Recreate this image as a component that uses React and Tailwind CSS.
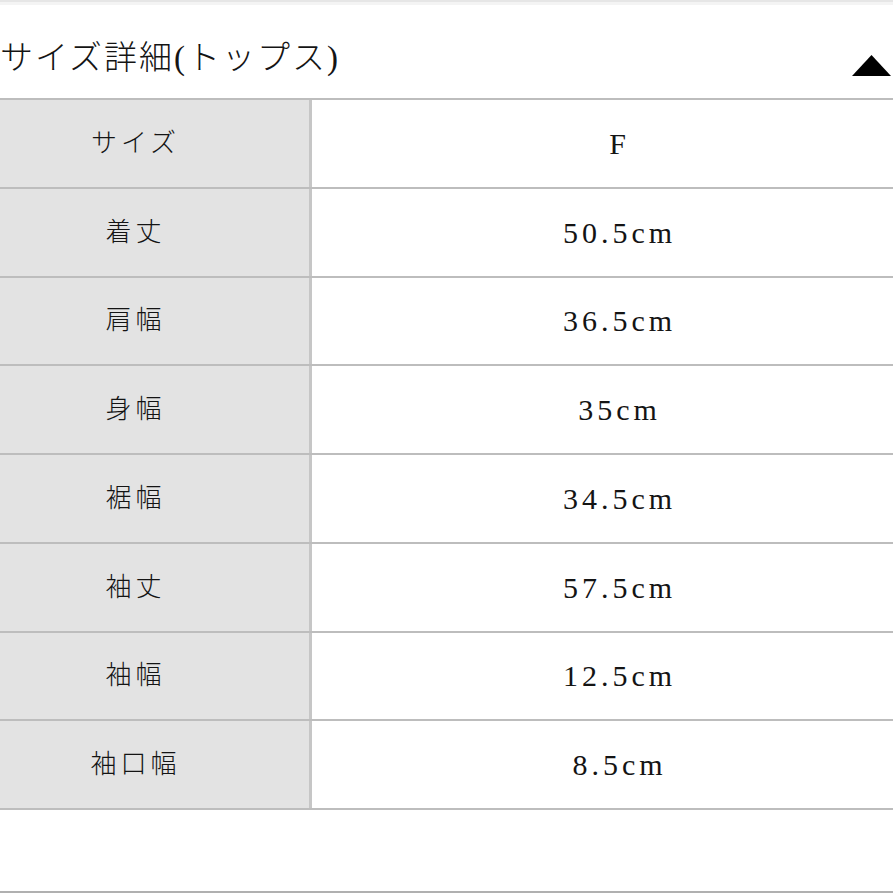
import React from "react";

const rows = [
  ["サイズ", "F"],
  ["着丈", "50.5cm"],
  ["肩幅", "36.5cm"],
  ["身幅", "35cm"],
  ["裾幅", "34.5cm"],
  ["袖丈", "57.5cm"],
  ["袖幅", "12.5cm"],
  ["袖口幅", "8.5cm"],
];

const font = {
  fontFamily: '"Liberation Serif", "Noto Sans CJK JP", serif',
};

export default function App() {
  return (
    <div
      className="w-[893px] h-[893px] bg-white overflow-hidden flex flex-col text-[#141414]"
      style={font}
    >
      <div className="h-[2px] bg-[#e6e6e6] shrink-0" />
      <div className="h-[3px] bg-[#f4f4f4] shrink-0" />
      <div className="h-[93px] shrink-0 flex items-start justify-between">
        <div className="ml-0 mt-[33px] text-[33px] leading-[40px] tracking-[2px] font-light">
          サイズ詳細(トップス)
        </div>
        <svg
          className="mt-[50px] mr-[2px]"
          width="39"
          height="22"
          viewBox="0 0 39 22"
        >
          <polygon points="19.5,0 39,21 0,21" fill="#000" />
        </svg>
      </div>
      <div className="border-t-2 border-[#bdbdbd] shrink-0">
        {rows.map(([k, v]) => (
          <div
            key={k}
            className="h-[88.75px] flex border-b-2 border-[#bdbdbd]"
          >
            <div className="w-[312px] bg-[#e3e3e3] border-r-[3px] border-[#c6c6c6] flex items-center justify-center pr-[38px] text-[26px] tracking-[4px] font-light">
              {k}
            </div>
            <div className="flex-1 flex items-center justify-center pl-[34px] text-[30px] tracking-[4px]">
              {v}
            </div>
          </div>
        ))}
      </div>
      <div className="flex-1" />
      <div className="h-[2px] bg-[#b0b0b0] shrink-0" />
    </div>
  );
}
